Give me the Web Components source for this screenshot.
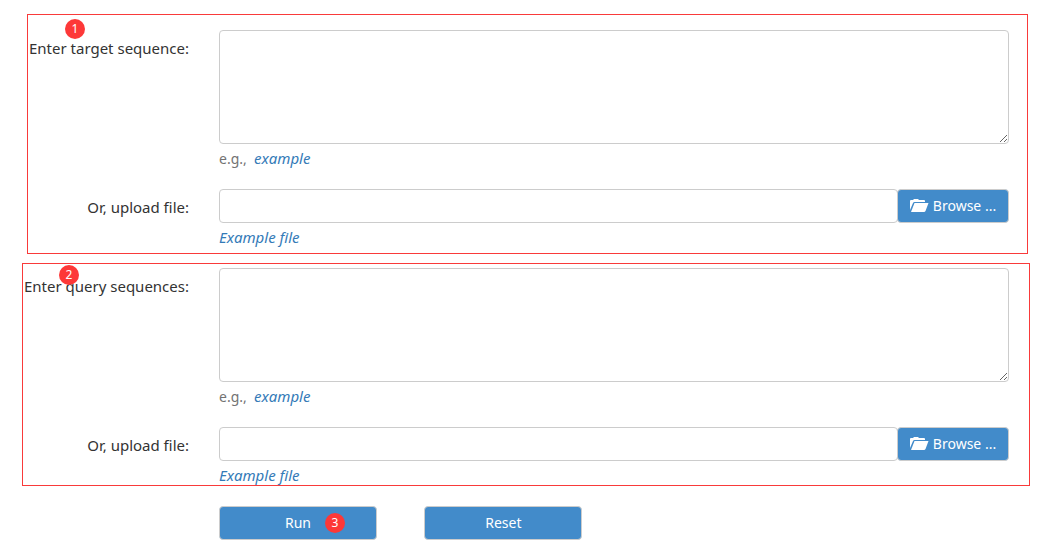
<!DOCTYPE html>
<html lang="en">
<head>
<meta charset="utf-8">
<meta name="viewport" content="width=device-width, initial-scale=1">
<title>Sequence search</title>
<style>
    body {
        margin: 0;
        background: #fff;
        color: #333;
        font: 15px/24px "Noto Sans", "Open Sans", sans-serif;
    }
    sequence-panel.target {
        --label-width: 161px;
        margin: 14px 26px 0 27px;
        padding: 15px 18px 7px 0;
    }
    sequence-panel.query {
        --label-width: 166px;
        margin: 9px 24px 0 22px;
        padding: 4px 20px 1px 0;
    }
    form-actions {
        margin: 20px 45px 0 219px;
    }
</style>
</head>
<body>
<main>
    <sequence-panel class="target" label="Enter target sequence:" step="1"></sequence-panel>
    <sequence-panel class="query" label="Enter query sequences:" step="2"></sequence-panel>
    <form-actions></form-actions>
</main>

<script>
// red circle with the number of the step
class StepBadge extends HTMLElement {
    constructor(){
        super();
        this.attachShadow({ mode: "open" });
    }
    connectedCallback(){
        this.shadowRoot.innerHTML = `
            <style>
                :host {
                    display: block;
                    width: 20px;
                    height: 20px;
                    border-radius: 50%;
                    background: #fd3838;
                    color: #fff;
                    font-size: 12px;
                    line-height: 20px;
                    text-align: center;
                    pointer-events: none;
                }
            </style>
            <slot></slot>
        `;
    }
}

// label on the left, control and its hint on the right
class FormRow extends HTMLElement {
    constructor(){
        super();
        this.attachShadow({ mode: "open" });
    }
    connectedCallback(){
        this.shadowRoot.innerHTML = `
            <style>
                :host {
                    display: grid;
                    grid-template-columns: var(--label-width) minmax(0, 1fr);
                    column-gap: 30px;
                }
                .label {
                    display: flex;
                    justify-content: flex-end;
                    padding-top: 6px;
                    white-space: nowrap;
                }
                .hint {
                    display: flex;
                    padding-top: 5px;
                    color: #737373;
                    font-size: 14px;
                    line-height: 18px;
                }
            </style>
            <div class="label"><slot name="label"></slot></div>
            <div>
                <slot></slot>
                <div class="hint"><slot name="hint"></slot></div>
            </div>
        `;
    }
}

// rounded blue button
class BlueButton extends HTMLElement {
    constructor(){
        super();
        this.attachShadow({ mode: "open" });
    }
    connectedCallback(){
        this.shadowRoot.innerHTML = `
            <style>
                :host {
                    display: block;
                }
                button {
                    display: flex;
                    align-items: center;
                    justify-content: center;
                    gap: 4px;
                    box-sizing: border-box;
                    width: 100%;
                    height: 34px;
                    margin: 0;
                    padding: 0 11px;
                    border: 1px solid #ccc;
                    border-radius: 4px;
                    background: #428bca;
                    color: #fff;
                    font: inherit;
                    font-size: 14px;
                    white-space: nowrap;
                    cursor: pointer;
                }
                button:hover {
                    background: #3071a9;
                }
            </style>
            <button type="button"><slot></slot></button>
        `;
    }
}

class SequencePanel extends HTMLElement {
    constructor(){
        super();
        this.attachShadow({ mode: "open" });
    }
    getTemplate(){
        const template = document.createElement('template');
        template.innerHTML = `
            ${this.getStyles()}
            <step-badge>${this.getAttribute('step')}</step-badge>
            <form-row class="first">
                <label slot="label" for="sequence">${this.getAttribute('label')}</label>
                <textarea id="sequence"></textarea>
                <span slot="hint">e.g.,&nbsp; <a href="#example">example</a></span>
            </form-row>
            <form-row>
                <label slot="label" for="file">Or, upload file:</label>
                <div class="upload">
                    <input id="file" type="text">
                    <blue-button>
                        <svg width="19" height="14" viewBox="0 0 19 14" fill="#fff" aria-hidden="true">
                            <path d="M0 11V2Q0 1 1 1H3L4 0H8L9 1H14Q15 1 15 2V3H4.500Q3.500 3 3 4Z"/>
                            <path d="M4.500 4H18.500L15.500 12Q15 13 14 13H1Z"/>
                        </svg>
                        <span>Browse ...</span>
                    </blue-button>
                </div>
                <a slot="hint" href="#example-file">Example file</a>
            </form-row>
        `;
        return template;
    }
    getStyles(){
        return `
            <style>
                :host {
                    display: block;
                    position: relative;
                    border: 1px solid #f93a3a;
                }
                .first {
                    margin-bottom: 21px;
                }
                textarea, input {
                    display: block;
                    box-sizing: border-box;
                    width: 100%;
                    margin: 0;
                    padding: 6px 12px;
                    border: 1px solid #ccc;
                    border-radius: 4px;
                    background: #fff;
                    color: #555;
                    font: inherit;
                    font-size: 14px;
                }
                textarea {
                    height: 114px;
                    resize: vertical;
                }
                input {
                    flex: 1;
                    min-width: 0;
                    height: 34px;
                }
                .upload {
                    display: flex;
                }
                /* share one border with the text box */
                blue-button {
                    flex: 0 0 112px;
                    margin-left: -1px;
                }
                svg {
                    flex: none;
                }
                a {
                    color: #337ab7;
                    font-size: 15px;
                    font-style: italic;
                    text-decoration: none;
                }
                a:hover {
                    text-decoration: underline;
                }
                step-badge {
                    position: absolute;
                    top: 4px;
                    left: 37px;
                }
                :host(.query) step-badge {
                    top: 1px;
                    left: 36px;
                }
            </style>
        `;
    }
    connectedCallback(){
        this.shadowRoot.appendChild(this.getTemplate().content.cloneNode(true));
    }
}

class FormActions extends HTMLElement {
    constructor(){
        super();
        this.attachShadow({ mode: "open" });
    }
    connectedCallback(){
        this.shadowRoot.innerHTML = `
            <style>
                :host {
                    display: grid;
                    grid-template-columns: 20% 20%;
                    column-gap: 6%;
                }
                .run {
                    position: relative;
                }
                step-badge {
                    position: absolute;
                    top: 7px;
                    right: 32px;
                }
            </style>
            <div class="run">
                <blue-button>Run</blue-button>
                <step-badge>3</step-badge>
            </div>
            <blue-button>Reset</blue-button>
        `;
    }
}

customElements.define('step-badge', StepBadge);
customElements.define('form-row', FormRow);
customElements.define('blue-button', BlueButton);
customElements.define('sequence-panel', SequencePanel);
customElements.define('form-actions', FormActions);
</script>
</body>
</html>
